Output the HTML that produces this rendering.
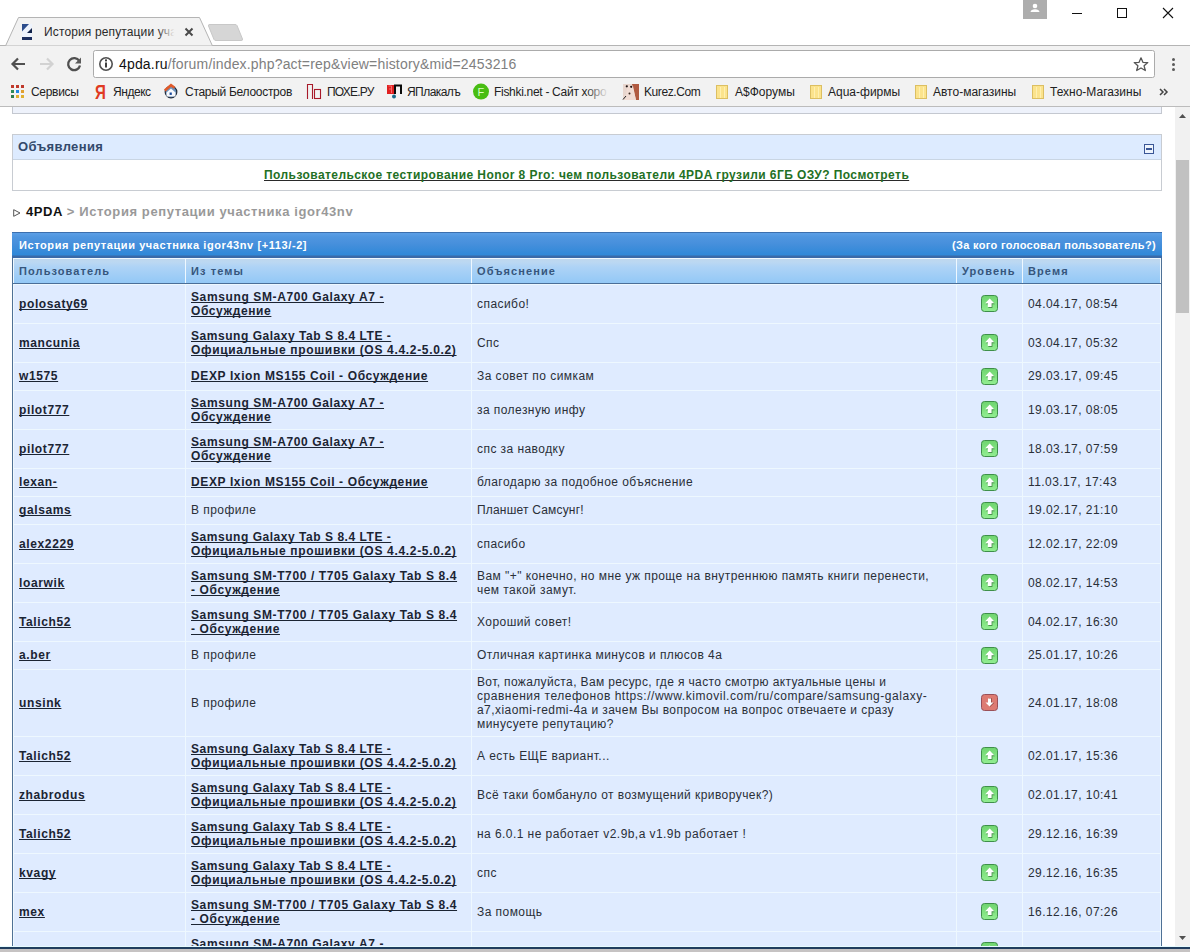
<!DOCTYPE html>
<html><head><meta charset="utf-8"><style>
*{margin:0;padding:0;box-sizing:border-box}
html,body{width:1190px;height:952px;overflow:hidden;background:#fff;font-family:"Liberation Sans", sans-serif}
#root{position:relative;width:1190px;height:952px;overflow:hidden;background:#fff}
.a{position:absolute}
.t{position:absolute;white-space:pre;line-height:1}
.cell{position:absolute;background:#dfebff}
.lk{position:absolute;white-space:pre;font-size:12px;line-height:14px;font-weight:bold;color:#1b2433;letter-spacing:0.62px;text-decoration:underline;text-decoration-thickness:1px;text-underline-offset:1px;text-decoration-skip-ink:none}
.nm{position:absolute;white-space:pre;font-size:12px;line-height:14px;color:#2a2f38;letter-spacing:0.44px}
.ic{position:absolute}
.bm{position:absolute;top:85px;font-size:12px;line-height:14px;color:#222;white-space:pre}
</style></head><body><div id="root">
<!-- title bar -->
<svg class="a" style="left:0;top:0" width="1190" height="46" viewBox="0 0 1190 46">
  <path d="M0 45.5 H6" stroke="#b4b4b4" stroke-width="1"/>
  <path d="M211 45.5 H1190" stroke="#b4b4b4" stroke-width="1"/>
  <path d="M5.5 46 L18.5 17.5 H199.5 L212.5 46 Z" fill="#f2f2f2" stroke="#b4b4b4" stroke-width="1"/>
  <path d="M209 24.5 H235 Q236.5 24.5 237 25.5 L242.5 39 Q243 40.5 241 40.5 H216 Q214.5 40.5 214 39.5 L208.5 26 Q208 24.5 209.5 24.5 Z" fill="#d6d6d6" stroke="#c8c8c8" stroke-width="1"/>
  <!-- favicon -->
  <rect x="22" y="24" width="10" height="16" fill="#eef3fc"/>
  <path d="M22 24 H29 L22 31.5 Z" fill="#2d4d8c"/>
  <path d="M32 28 V33 H27 Z" fill="#10224a"/>
  <rect x="22" y="37" width="10" height="3" fill="#1c2e5e"/>
  <!-- close x -->
  <path d="M185.5 28.5 L192.5 35.5 M192.5 28.5 L185.5 35.5" stroke="#4a4a4a" stroke-width="2"/>
  <!-- profile -->
  <rect x="1023" y="0" width="24" height="19" fill="#adadad"/>
  <circle cx="1035" cy="6" r="2.3" fill="#fff"/>
  <path d="M1030.5 12 Q1031 9.2 1035 9.2 Q1039 9.2 1039.5 12 Z" fill="#fff"/>
  <!-- min max close -->
  <path d="M1072 13.5 H1082" stroke="#111" stroke-width="1"/>
  <rect x="1117.5" y="8.5" width="9" height="9" fill="none" stroke="#111" stroke-width="1"/>
  <path d="M1163 8 L1173 18 M1173 8 L1163 18" stroke="#111" stroke-width="1.1"/>
</svg>
<div class="t" style="left:44px;top:25px;font-size:12px;line-height:14px;color:#2a2a2a;letter-spacing:0.13px">История репутации уча</div>
<div class="a" style="left:157px;top:22px;width:22px;height:20px;background:linear-gradient(90deg,rgba(242,242,242,0),#f2f2f2 80%)"></div>
<!-- toolbar -->
<div class="a" style="left:0;top:46px;width:1190px;height:60px;background:#f2f2f2"></div>
<div class="a" style="left:0;top:106px;width:1190px;height:1px;background:#bcbcbc"></div>
<svg class="a" style="left:0;top:46px" width="1190" height="60" viewBox="0 46 1190 60">
  <!-- back -->
  <path d="M25 64 H12.5 M18 58.5 L12.5 64 L18 69.5" stroke="#505050" stroke-width="2.2" fill="none"/>
  <!-- forward -->
  <path d="M40 64 H52.5 M47 58.5 L52.5 64 L47 69.5" stroke="#d2d2d2" stroke-width="2.2" fill="none"/>
  <!-- reload -->
  <path d="M79.3 61 A6 6 0 1 0 80 65.5" stroke="#505050" stroke-width="2.3" fill="none"/>
  <path d="M81 57.5 V63.5 H75 Z" fill="#5a5a5a"/>
  <!-- omnibox -->
  <rect x="93.5" y="50.5" width="1061" height="27" rx="2" fill="#fff" stroke="#ababab"/>
  <circle cx="106" cy="64" r="6.2" stroke="#505050" stroke-width="1.6" fill="none"/>
  <rect x="105" y="62.5" width="2" height="5" fill="#404040"/>
  <rect x="105" y="59.4" width="2" height="2" fill="#404040"/>
  <!-- star -->
  <path d="M1141 57.8 L1142.9 62.3 L1147.8 62.6 L1144.1 65.8 L1145.3 70.5 L1141 68 L1136.7 70.5 L1137.9 65.8 L1134.2 62.6 L1139.1 62.3 Z" fill="none" stroke="#555" stroke-width="1.3" stroke-linejoin="round"/>
  <!-- menu -->
  <circle cx="1173.5" cy="59.5" r="1.5" fill="#5a5a5a"/>
  <circle cx="1173.5" cy="64.5" r="1.5" fill="#5a5a5a"/>
  <circle cx="1173.5" cy="69.5" r="1.5" fill="#5a5a5a"/>
  <!-- apps grid -->
  <g>
   <rect x="11" y="85" width="3" height="3" fill="#c0392b"/><rect x="16" y="85" width="3" height="3" fill="#c0392b"/><rect x="21" y="85" width="3" height="3" fill="#c0392b"/>
   <rect x="11" y="90" width="3" height="3" fill="#2e8b57"/><rect x="16" y="90" width="3" height="3" fill="#1e88e5"/><rect x="21" y="90" width="3" height="3" fill="#e0a030"/>
   <rect x="11" y="95" width="3" height="3" fill="#2e7d4f"/><rect x="16" y="95" width="3" height="3" fill="#e0b030"/><rect x="21" y="95" width="3" height="3" fill="#e0b030"/>
  </g>
  <!-- yandex Я -->
  <text x="95" y="99.5" font-family="Liberation Sans" font-weight="bold" font-size="21" fill="#e03a22" transform="translate(95 99.5) scale(0.72 1) translate(-95 -99.5)">Я</text>
  <!-- old house -->
  <circle cx="171" cy="92" r="5.8" fill="#6d93bb" stroke="#1e2a3a" stroke-width="1.2"/>
  <path d="M166.5 92.5 L171 88.5 L175.5 92.5 V96.5 H166.5 Z" fill="#f6f8fc"/>
  <rect x="169.6" y="92.5" width="2.2" height="2.4" fill="#1a4a9a"/>
  <path d="M164.8 90.5 L171 85.2 L174.5 87.8" stroke="#e05a2a" stroke-width="2.6" fill="none"/>
  <!-- ПО -->
  <path d="M307.5 99 V84.5 H312.5 V99" stroke="#a81a2a" stroke-width="1.1" fill="none"/>
  <rect x="314.5" y="89.5" width="6" height="9" stroke="#a81a2a" stroke-width="1.1" fill="none"/>
  <!-- ЯП -->
  <rect x="387" y="85" width="7" height="9" fill="#e02020"/>
  <path d="M388.5 86 H391.5 V93 M389 89 H391" stroke="#ff8080" stroke-width="0.8" fill="none"/>
  <path d="M395 94 V85.5 H401 V94" stroke="#0a0a0a" stroke-width="2" fill="none"/>
  <circle cx="394" cy="96.6" r="2" fill="#1a6a8a"/>
  <!-- fishki -->
  <circle cx="481" cy="91.6" r="8" fill="#48bd12"/>
  <text x="477.5" y="96" font-family="Liberation Sans" font-size="11" fill="#d8ffc0">F</text>
  <!-- kurez -->
  <rect x="623" y="84" width="16" height="16" fill="#e8d6ce"/>
  <path d="M632 84 H639 V100 H636 Q634 92 632 84 Z" fill="#b05a40"/>
  <path d="M625 100 L627 89 Q628 85 630 85 L633 86 L636 100 Z" fill="#f0dcd4"/>
  <circle cx="626.8" cy="86.3" r="1.1" fill="#1a1010"/><circle cx="631.2" cy="86.8" r="1.1" fill="#1a1010"/>
  <circle cx="629.5" cy="93.6" r="1" fill="#3a2a20"/>
  <path d="M623 99.5 L626 96" stroke="#222" stroke-width="1"/>
  <!-- folders -->
  <rect x="716.5" y="85.5" width="11" height="13" fill="#fbe38c" stroke="#dcbf62"/><path d="M720.5 87 V98 M724.5 87 V98" stroke="#fff0b0" stroke-width="1"/><rect x="810.5" y="85.5" width="11" height="13" fill="#fbe38c" stroke="#dcbf62"/><path d="M814.5 87 V98 M818.5 87 V98" stroke="#fff0b0" stroke-width="1"/><rect x="915.5" y="85.5" width="11" height="13" fill="#fbe38c" stroke="#dcbf62"/><path d="M919.5 87 V98 M923.5 87 V98" stroke="#fff0b0" stroke-width="1"/><rect x="1032.5" y="85.5" width="11" height="13" fill="#fbe38c" stroke="#dcbf62"/><path d="M1036.5 87 V98 M1040.5 87 V98" stroke="#fff0b0" stroke-width="1"/>
  <!-- >> -->
  <path d="M1160 89 L1163 92 L1160 95 M1164 89 L1167 92 L1164 95" stroke="#444" stroke-width="1.5" fill="none"/>
</svg>
<div class="t" style="left:119px;top:57px;font-size:14px;line-height:14px;color:#808080;letter-spacing:0.17px"><span style="color:#111">4pda.ru</span>/forum/index.php?act=rep&amp;view=history&amp;mid=2453216</div>
<div class="bm" style="left:31px;letter-spacing:-0.3px">Сервисы</div>
<div class="bm" style="left:113px;letter-spacing:-0.45px">Яндекс</div>
<div class="bm" style="left:185px;letter-spacing:-0.29px">Старый Белоостров</div>
<div class="bm" style="left:327px;letter-spacing:-0.8px">ПОХЕ.РУ</div>
<div class="bm" style="left:407px;letter-spacing:-0.55px">ЯПлакалъ</div>
<div class="bm" style="left:494px;letter-spacing:-0.3px">Fishki.net - Сайт хоро</div>
<div class="a" style="left:585px;top:82px;width:28px;height:20px;background:linear-gradient(90deg,rgba(242,242,242,0),#f2f2f2 85%)"></div>
<div class="bm" style="left:644px;letter-spacing:-0.42px">Kurez.Com</div>
<div class="bm" style="left:735px">A$Форумы</div>
<div class="bm" style="left:828px">Aqua-фирмы</div>
<div class="bm" style="left:933px">Авто-магазины</div>
<div class="bm" style="left:1050px">Техно-Магазины</div>

<!-- page -->
<div class="a" style="left:12px;top:107px;width:1150px;height:7px;background:#eef2fb;border:1px solid #c4c8d0;border-top:none"></div>
<div class="a" style="left:12px;top:134px;width:1150px;height:57px;border:1px solid #c8ccd2;background:#fff"></div>
<div class="a" style="left:13px;top:135px;width:1148px;height:25px;background:#ddebff;border-bottom:1px solid #c9d5e3"></div>
<div class="t" style="left:18px;top:140px;font-size:13px;font-weight:bold;color:#33496b;letter-spacing:0.36px">Объявления</div>
<svg class="a" style="left:1144px;top:144px" width="10" height="10" viewBox="0 0 10 10"><rect x="0.5" y="0.5" width="9" height="9" fill="#eef4fc" stroke="#3a5696"/><rect x="2" y="4" width="6" height="2" fill="#3a5696"/></svg>
<div class="t" style="left:264px;top:169px;font-size:12px;font-weight:bold;color:#237024;letter-spacing:0.43px;text-decoration:underline;text-decoration-color:#2a2a2a;text-underline-offset:1px;text-decoration-skip-ink:none">Пользовательское тестирование Honor 8 Pro: чем пользователи 4PDA грузили 6ГБ ОЗУ? Посмотреть</div>

<svg class="a" style="left:13px;top:209px" width="8" height="8" viewBox="0 0 8 8"><path d="M0.7 0.7 L7 4 L0.7 7.3 Z" fill="none" stroke="#555" stroke-width="1"/></svg>
<div class="t" style="left:26px;top:205px;font-size:13px;font-weight:bold;color:#999;letter-spacing:0.6px"><span style="color:#111">4PDA</span> &gt; История репутации участника igor43nv</div>

<!-- table -->
<div class="a" style="left:12px;top:232px;width:1150px;height:720px;background:#eef8ff;border-left:1px solid #4f7196;border-right:1px solid #4f7196"></div>
<div class="a" style="left:12px;top:232px;width:1150px;height:26px;background:linear-gradient(180deg,#3b6fae 0,#3b6fae 1px,#5c9fe6 1px,#4f96df 5px,#4890dc 11px,#2f88d8 23px,#3a6aa8 24px,#3a6aa8 26px)"></div>
<div class="t" style="left:19px;top:240px;font-size:11px;font-weight:bold;color:#fff;letter-spacing:0.59px">История репутации участника igor43nv [+113/-2]</div>
<div class="t" style="left:952px;top:240px;font-size:11px;font-weight:bold;color:#fff;letter-spacing:0.33px">(За кого голосовал пользователь?)</div>
<div class="a" style="left:14px;top:259px;width:171px;height:24px;background:linear-gradient(180deg,#bed7ee 0,#bcd8f2 3px,#aed3f6 8px,#93c8f6 24px)"></div><div class="a" style="left:186px;top:259px;width:285px;height:24px;background:linear-gradient(180deg,#bed7ee 0,#bcd8f2 3px,#aed3f6 8px,#93c8f6 24px)"></div><div class="a" style="left:472px;top:259px;width:484px;height:24px;background:linear-gradient(180deg,#bed7ee 0,#bcd8f2 3px,#aed3f6 8px,#93c8f6 24px)"></div><div class="a" style="left:957px;top:259px;width:65px;height:24px;background:linear-gradient(180deg,#bed7ee 0,#bcd8f2 3px,#aed3f6 8px,#93c8f6 24px)"></div><div class="a" style="left:1023px;top:259px;width:137px;height:24px;background:linear-gradient(180deg,#bed7ee 0,#bcd8f2 3px,#aed3f6 8px,#93c8f6 24px)"></div>
<div class="a" style="left:13px;top:283px;width:1148px;height:1px;background:#4b6e98"></div>
<div class="t" style="left:19px;top:266px;font-size:11px;font-weight:bold;color:#36567c;letter-spacing:1.1px">Пользователь</div>
<div class="t" style="left:191px;top:266px;font-size:11px;font-weight:bold;color:#36567c;letter-spacing:1.1px">Из темы</div>
<div class="t" style="left:477px;top:266px;font-size:11px;font-weight:bold;color:#36567c;letter-spacing:1.1px">Объяснение</div>
<div class="t" style="left:962px;top:266px;font-size:11px;font-weight:bold;color:#36567c;letter-spacing:1.1px">Уровень</div>
<div class="t" style="left:1028px;top:266px;font-size:11px;font-weight:bold;color:#36567c;letter-spacing:1.1px">Время</div>
<div class="cell" style="left:14px;top:285px;width:171px;height:38px"></div><div class="cell" style="left:186px;top:285px;width:285px;height:38px"></div><div class="cell" style="left:472px;top:285px;width:484px;height:38px"></div><div class="cell" style="left:957px;top:285px;width:65px;height:38px"></div><div class="cell" style="left:1023px;top:285px;width:137px;height:38px"></div><div class="lk" style="left:19px;top:297px"><div style="height:14px">polosaty69</div></div><div class="lk" style="left:191px;top:290px"><div style="height:14px">Samsung SM-A700 Galaxy A7 -</div><div style="height:14px">Обсуждение</div></div><div class="nm" style="left:477px;top:297px"><div style="height:14px">спасибо!</div></div><svg class="ic" style="left:981px;top:295px" width="17" height="17" viewBox="0 0 17 17">
<defs><linearGradient id="gu" x1="0" y1="0" x2="0" y2="1"><stop offset="0" stop-color="#6fd46f"/><stop offset="1" stop-color="#92ee92"/></linearGradient></defs>
<rect x="0.5" y="0.5" width="16" height="16" rx="3" fill="url(#gu)" stroke="#3f8f4a"/>
<path d="M8.5 3.8 L13 8.3 L10.5 8.3 L10.5 12 L6.5 12 L6.5 8.3 L4 8.3 Z" fill="#1f5a25" opacity="0.6" transform="translate(0.9,0.9)"/>
<path d="M8.7 3.6 L13.2 8.2 L10.6 8.2 L10.6 12 L6.8 12 L6.8 8.2 L4.2 8.2 Z" fill="#ffffff"/>
</svg><div class="nm" style="left:1028px;top:297px"><div style="height:14px">04.04.17, 08:54</div></div><div class="cell" style="left:14px;top:324px;width:171px;height:38px"></div><div class="cell" style="left:186px;top:324px;width:285px;height:38px"></div><div class="cell" style="left:472px;top:324px;width:484px;height:38px"></div><div class="cell" style="left:957px;top:324px;width:65px;height:38px"></div><div class="cell" style="left:1023px;top:324px;width:137px;height:38px"></div><div class="lk" style="left:19px;top:336px"><div style="height:14px">mancunia</div></div><div class="lk" style="left:191px;top:329px"><div style="height:14px;letter-spacing:0.535px">Samsung Galaxy Tab S 8.4 LTE -</div><div style="height:14px;letter-spacing:0.675px">Официальные прошивки (OS 4.4.2-5.0.2)</div></div><div class="nm" style="left:477px;top:336px"><div style="height:14px">Спс</div></div><svg class="ic" style="left:981px;top:334px" width="17" height="17" viewBox="0 0 17 17">
<defs><linearGradient id="gu" x1="0" y1="0" x2="0" y2="1"><stop offset="0" stop-color="#6fd46f"/><stop offset="1" stop-color="#92ee92"/></linearGradient></defs>
<rect x="0.5" y="0.5" width="16" height="16" rx="3" fill="url(#gu)" stroke="#3f8f4a"/>
<path d="M8.5 3.8 L13 8.3 L10.5 8.3 L10.5 12 L6.5 12 L6.5 8.3 L4 8.3 Z" fill="#1f5a25" opacity="0.6" transform="translate(0.9,0.9)"/>
<path d="M8.7 3.6 L13.2 8.2 L10.6 8.2 L10.6 12 L6.8 12 L6.8 8.2 L4.2 8.2 Z" fill="#ffffff"/>
</svg><div class="nm" style="left:1028px;top:336px"><div style="height:14px">03.04.17, 05:32</div></div><div class="cell" style="left:14px;top:363px;width:171px;height:27px"></div><div class="cell" style="left:186px;top:363px;width:285px;height:27px"></div><div class="cell" style="left:472px;top:363px;width:484px;height:27px"></div><div class="cell" style="left:957px;top:363px;width:65px;height:27px"></div><div class="cell" style="left:1023px;top:363px;width:137px;height:27px"></div><div class="lk" style="left:19px;top:369px"><div style="height:14px">w1575</div></div><div class="lk" style="left:191px;top:369px"><div style="height:14px">DEXP Ixion MS155 Coil - Обсуждение</div></div><div class="nm" style="left:477px;top:369px"><div style="height:14px">За совет по симкам</div></div><svg class="ic" style="left:981px;top:368px" width="17" height="17" viewBox="0 0 17 17">
<defs><linearGradient id="gu" x1="0" y1="0" x2="0" y2="1"><stop offset="0" stop-color="#6fd46f"/><stop offset="1" stop-color="#92ee92"/></linearGradient></defs>
<rect x="0.5" y="0.5" width="16" height="16" rx="3" fill="url(#gu)" stroke="#3f8f4a"/>
<path d="M8.5 3.8 L13 8.3 L10.5 8.3 L10.5 12 L6.5 12 L6.5 8.3 L4 8.3 Z" fill="#1f5a25" opacity="0.6" transform="translate(0.9,0.9)"/>
<path d="M8.7 3.6 L13.2 8.2 L10.6 8.2 L10.6 12 L6.8 12 L6.8 8.2 L4.2 8.2 Z" fill="#ffffff"/>
</svg><div class="nm" style="left:1028px;top:369px"><div style="height:14px">29.03.17, 09:45</div></div><div class="cell" style="left:14px;top:391px;width:171px;height:38px"></div><div class="cell" style="left:186px;top:391px;width:285px;height:38px"></div><div class="cell" style="left:472px;top:391px;width:484px;height:38px"></div><div class="cell" style="left:957px;top:391px;width:65px;height:38px"></div><div class="cell" style="left:1023px;top:391px;width:137px;height:38px"></div><div class="lk" style="left:19px;top:403px"><div style="height:14px">pilot777</div></div><div class="lk" style="left:191px;top:396px"><div style="height:14px">Samsung SM-A700 Galaxy A7 -</div><div style="height:14px">Обсуждение</div></div><div class="nm" style="left:477px;top:403px"><div style="height:14px">за полезную инфу</div></div><svg class="ic" style="left:981px;top:401px" width="17" height="17" viewBox="0 0 17 17">
<defs><linearGradient id="gu" x1="0" y1="0" x2="0" y2="1"><stop offset="0" stop-color="#6fd46f"/><stop offset="1" stop-color="#92ee92"/></linearGradient></defs>
<rect x="0.5" y="0.5" width="16" height="16" rx="3" fill="url(#gu)" stroke="#3f8f4a"/>
<path d="M8.5 3.8 L13 8.3 L10.5 8.3 L10.5 12 L6.5 12 L6.5 8.3 L4 8.3 Z" fill="#1f5a25" opacity="0.6" transform="translate(0.9,0.9)"/>
<path d="M8.7 3.6 L13.2 8.2 L10.6 8.2 L10.6 12 L6.8 12 L6.8 8.2 L4.2 8.2 Z" fill="#ffffff"/>
</svg><div class="nm" style="left:1028px;top:403px"><div style="height:14px">19.03.17, 08:05</div></div><div class="cell" style="left:14px;top:430px;width:171px;height:38px"></div><div class="cell" style="left:186px;top:430px;width:285px;height:38px"></div><div class="cell" style="left:472px;top:430px;width:484px;height:38px"></div><div class="cell" style="left:957px;top:430px;width:65px;height:38px"></div><div class="cell" style="left:1023px;top:430px;width:137px;height:38px"></div><div class="lk" style="left:19px;top:442px"><div style="height:14px">pilot777</div></div><div class="lk" style="left:191px;top:435px"><div style="height:14px">Samsung SM-A700 Galaxy A7 -</div><div style="height:14px">Обсуждение</div></div><div class="nm" style="left:477px;top:442px"><div style="height:14px">спс за наводку</div></div><svg class="ic" style="left:981px;top:440px" width="17" height="17" viewBox="0 0 17 17">
<defs><linearGradient id="gu" x1="0" y1="0" x2="0" y2="1"><stop offset="0" stop-color="#6fd46f"/><stop offset="1" stop-color="#92ee92"/></linearGradient></defs>
<rect x="0.5" y="0.5" width="16" height="16" rx="3" fill="url(#gu)" stroke="#3f8f4a"/>
<path d="M8.5 3.8 L13 8.3 L10.5 8.3 L10.5 12 L6.5 12 L6.5 8.3 L4 8.3 Z" fill="#1f5a25" opacity="0.6" transform="translate(0.9,0.9)"/>
<path d="M8.7 3.6 L13.2 8.2 L10.6 8.2 L10.6 12 L6.8 12 L6.8 8.2 L4.2 8.2 Z" fill="#ffffff"/>
</svg><div class="nm" style="left:1028px;top:442px"><div style="height:14px">18.03.17, 07:59</div></div><div class="cell" style="left:14px;top:469px;width:171px;height:27px"></div><div class="cell" style="left:186px;top:469px;width:285px;height:27px"></div><div class="cell" style="left:472px;top:469px;width:484px;height:27px"></div><div class="cell" style="left:957px;top:469px;width:65px;height:27px"></div><div class="cell" style="left:1023px;top:469px;width:137px;height:27px"></div><div class="lk" style="left:19px;top:475px"><div style="height:14px">lexan-</div></div><div class="lk" style="left:191px;top:475px"><div style="height:14px">DEXP Ixion MS155 Coil - Обсуждение</div></div><div class="nm" style="left:477px;top:475px"><div style="height:14px">благодарю за подобное объяснение</div></div><svg class="ic" style="left:981px;top:474px" width="17" height="17" viewBox="0 0 17 17">
<defs><linearGradient id="gu" x1="0" y1="0" x2="0" y2="1"><stop offset="0" stop-color="#6fd46f"/><stop offset="1" stop-color="#92ee92"/></linearGradient></defs>
<rect x="0.5" y="0.5" width="16" height="16" rx="3" fill="url(#gu)" stroke="#3f8f4a"/>
<path d="M8.5 3.8 L13 8.3 L10.5 8.3 L10.5 12 L6.5 12 L6.5 8.3 L4 8.3 Z" fill="#1f5a25" opacity="0.6" transform="translate(0.9,0.9)"/>
<path d="M8.7 3.6 L13.2 8.2 L10.6 8.2 L10.6 12 L6.8 12 L6.8 8.2 L4.2 8.2 Z" fill="#ffffff"/>
</svg><div class="nm" style="left:1028px;top:475px"><div style="height:14px">11.03.17, 17:43</div></div><div class="cell" style="left:14px;top:497px;width:171px;height:27px"></div><div class="cell" style="left:186px;top:497px;width:285px;height:27px"></div><div class="cell" style="left:472px;top:497px;width:484px;height:27px"></div><div class="cell" style="left:957px;top:497px;width:65px;height:27px"></div><div class="cell" style="left:1023px;top:497px;width:137px;height:27px"></div><div class="lk" style="left:19px;top:503px"><div style="height:14px">galsams</div></div><div class="nm" style="left:191px;top:503px"><div style="height:14px">В профиле</div></div><div class="nm" style="left:477px;top:503px"><div style="height:14px;letter-spacing:0.190px">Планшет Самсунг!</div></div><svg class="ic" style="left:981px;top:502px" width="17" height="17" viewBox="0 0 17 17">
<defs><linearGradient id="gu" x1="0" y1="0" x2="0" y2="1"><stop offset="0" stop-color="#6fd46f"/><stop offset="1" stop-color="#92ee92"/></linearGradient></defs>
<rect x="0.5" y="0.5" width="16" height="16" rx="3" fill="url(#gu)" stroke="#3f8f4a"/>
<path d="M8.5 3.8 L13 8.3 L10.5 8.3 L10.5 12 L6.5 12 L6.5 8.3 L4 8.3 Z" fill="#1f5a25" opacity="0.6" transform="translate(0.9,0.9)"/>
<path d="M8.7 3.6 L13.2 8.2 L10.6 8.2 L10.6 12 L6.8 12 L6.8 8.2 L4.2 8.2 Z" fill="#ffffff"/>
</svg><div class="nm" style="left:1028px;top:503px"><div style="height:14px">19.02.17, 21:10</div></div><div class="cell" style="left:14px;top:525px;width:171px;height:38px"></div><div class="cell" style="left:186px;top:525px;width:285px;height:38px"></div><div class="cell" style="left:472px;top:525px;width:484px;height:38px"></div><div class="cell" style="left:957px;top:525px;width:65px;height:38px"></div><div class="cell" style="left:1023px;top:525px;width:137px;height:38px"></div><div class="lk" style="left:19px;top:537px"><div style="height:14px">alex2229</div></div><div class="lk" style="left:191px;top:530px"><div style="height:14px;letter-spacing:0.535px">Samsung Galaxy Tab S 8.4 LTE -</div><div style="height:14px;letter-spacing:0.675px">Официальные прошивки (OS 4.4.2-5.0.2)</div></div><div class="nm" style="left:477px;top:537px"><div style="height:14px">спасибо</div></div><svg class="ic" style="left:981px;top:535px" width="17" height="17" viewBox="0 0 17 17">
<defs><linearGradient id="gu" x1="0" y1="0" x2="0" y2="1"><stop offset="0" stop-color="#6fd46f"/><stop offset="1" stop-color="#92ee92"/></linearGradient></defs>
<rect x="0.5" y="0.5" width="16" height="16" rx="3" fill="url(#gu)" stroke="#3f8f4a"/>
<path d="M8.5 3.8 L13 8.3 L10.5 8.3 L10.5 12 L6.5 12 L6.5 8.3 L4 8.3 Z" fill="#1f5a25" opacity="0.6" transform="translate(0.9,0.9)"/>
<path d="M8.7 3.6 L13.2 8.2 L10.6 8.2 L10.6 12 L6.8 12 L6.8 8.2 L4.2 8.2 Z" fill="#ffffff"/>
</svg><div class="nm" style="left:1028px;top:537px"><div style="height:14px">12.02.17, 22:09</div></div><div class="cell" style="left:14px;top:564px;width:171px;height:38px"></div><div class="cell" style="left:186px;top:564px;width:285px;height:38px"></div><div class="cell" style="left:472px;top:564px;width:484px;height:38px"></div><div class="cell" style="left:957px;top:564px;width:65px;height:38px"></div><div class="cell" style="left:1023px;top:564px;width:137px;height:38px"></div><div class="lk" style="left:19px;top:576px"><div style="height:14px">loarwik</div></div><div class="lk" style="left:191px;top:569px"><div style="height:14px">Samsung SM-T700 / T705 Galaxy Tab S 8.4</div><div style="height:14px">- Обсуждение</div></div><div class="nm" style="left:477px;top:569px"><div style="height:14px">Вам &quot;+&quot; конечно, но мне уж проще на внутреннюю память книги перенести,</div><div style="height:14px">чем такой замут.</div></div><svg class="ic" style="left:981px;top:574px" width="17" height="17" viewBox="0 0 17 17">
<defs><linearGradient id="gu" x1="0" y1="0" x2="0" y2="1"><stop offset="0" stop-color="#6fd46f"/><stop offset="1" stop-color="#92ee92"/></linearGradient></defs>
<rect x="0.5" y="0.5" width="16" height="16" rx="3" fill="url(#gu)" stroke="#3f8f4a"/>
<path d="M8.5 3.8 L13 8.3 L10.5 8.3 L10.5 12 L6.5 12 L6.5 8.3 L4 8.3 Z" fill="#1f5a25" opacity="0.6" transform="translate(0.9,0.9)"/>
<path d="M8.7 3.6 L13.2 8.2 L10.6 8.2 L10.6 12 L6.8 12 L6.8 8.2 L4.2 8.2 Z" fill="#ffffff"/>
</svg><div class="nm" style="left:1028px;top:576px"><div style="height:14px">08.02.17, 14:53</div></div><div class="cell" style="left:14px;top:603px;width:171px;height:38px"></div><div class="cell" style="left:186px;top:603px;width:285px;height:38px"></div><div class="cell" style="left:472px;top:603px;width:484px;height:38px"></div><div class="cell" style="left:957px;top:603px;width:65px;height:38px"></div><div class="cell" style="left:1023px;top:603px;width:137px;height:38px"></div><div class="lk" style="left:19px;top:615px"><div style="height:14px">Talich52</div></div><div class="lk" style="left:191px;top:608px"><div style="height:14px">Samsung SM-T700 / T705 Galaxy Tab S 8.4</div><div style="height:14px">- Обсуждение</div></div><div class="nm" style="left:477px;top:615px"><div style="height:14px">Хороший совет!</div></div><svg class="ic" style="left:981px;top:613px" width="17" height="17" viewBox="0 0 17 17">
<defs><linearGradient id="gu" x1="0" y1="0" x2="0" y2="1"><stop offset="0" stop-color="#6fd46f"/><stop offset="1" stop-color="#92ee92"/></linearGradient></defs>
<rect x="0.5" y="0.5" width="16" height="16" rx="3" fill="url(#gu)" stroke="#3f8f4a"/>
<path d="M8.5 3.8 L13 8.3 L10.5 8.3 L10.5 12 L6.5 12 L6.5 8.3 L4 8.3 Z" fill="#1f5a25" opacity="0.6" transform="translate(0.9,0.9)"/>
<path d="M8.7 3.6 L13.2 8.2 L10.6 8.2 L10.6 12 L6.8 12 L6.8 8.2 L4.2 8.2 Z" fill="#ffffff"/>
</svg><div class="nm" style="left:1028px;top:615px"><div style="height:14px">04.02.17, 16:30</div></div><div class="cell" style="left:14px;top:642px;width:171px;height:27px"></div><div class="cell" style="left:186px;top:642px;width:285px;height:27px"></div><div class="cell" style="left:472px;top:642px;width:484px;height:27px"></div><div class="cell" style="left:957px;top:642px;width:65px;height:27px"></div><div class="cell" style="left:1023px;top:642px;width:137px;height:27px"></div><div class="lk" style="left:19px;top:648px"><div style="height:14px">a.ber</div></div><div class="nm" style="left:191px;top:648px"><div style="height:14px">В профиле</div></div><div class="nm" style="left:477px;top:648px"><div style="height:14px">Отличная картинка минусов и плюсов 4а</div></div><svg class="ic" style="left:981px;top:647px" width="17" height="17" viewBox="0 0 17 17">
<defs><linearGradient id="gu" x1="0" y1="0" x2="0" y2="1"><stop offset="0" stop-color="#6fd46f"/><stop offset="1" stop-color="#92ee92"/></linearGradient></defs>
<rect x="0.5" y="0.5" width="16" height="16" rx="3" fill="url(#gu)" stroke="#3f8f4a"/>
<path d="M8.5 3.8 L13 8.3 L10.5 8.3 L10.5 12 L6.5 12 L6.5 8.3 L4 8.3 Z" fill="#1f5a25" opacity="0.6" transform="translate(0.9,0.9)"/>
<path d="M8.7 3.6 L13.2 8.2 L10.6 8.2 L10.6 12 L6.8 12 L6.8 8.2 L4.2 8.2 Z" fill="#ffffff"/>
</svg><div class="nm" style="left:1028px;top:648px"><div style="height:14px">25.01.17, 10:26</div></div><div class="cell" style="left:14px;top:670px;width:171px;height:66px"></div><div class="cell" style="left:186px;top:670px;width:285px;height:66px"></div><div class="cell" style="left:472px;top:670px;width:484px;height:66px"></div><div class="cell" style="left:957px;top:670px;width:65px;height:66px"></div><div class="cell" style="left:1023px;top:670px;width:137px;height:66px"></div><div class="lk" style="left:19px;top:696px"><div style="height:14px">unsink</div></div><div class="nm" style="left:191px;top:696px"><div style="height:14px">В профиле</div></div><div class="nm" style="left:477px;top:675px"><div style="height:14px;letter-spacing:0.360px">Вот, пожалуйста, Вам ресурс, где я часто смотрю актуальные цены и</div><div style="height:14px;letter-spacing:0.530px">сравнения телефонов https://www.kimovil.com/ru/compare/samsung-galaxy-</div><div style="height:14px">a7,xiaomi-redmi-4a и зачем Вы вопросом на вопрос отвечаете и сразу</div><div style="height:14px">минусуете репутацию?</div></div><svg class="ic" style="left:981px;top:694px" width="17" height="17" viewBox="0 0 17 17">
<rect x="0.5" y="0.5" width="16" height="16" rx="3" fill="#dd7b73" stroke="#9a5058"/>
<path d="M7 4 L10 4 L10 8.5 L12.5 8.5 L8.5 12.5 L4.5 8.5 L7 8.5 Z" fill="#4a1a1a" opacity="0.55" transform="translate(0.8,0.3)"/>
<path d="M7 4.5 L10 4.5 L10 8.5 L12.5 8.5 L8.5 12.5 L4.5 8.5 L7 8.5 Z" fill="#ffffff"/>
</svg><div class="nm" style="left:1028px;top:696px"><div style="height:14px">24.01.17, 18:08</div></div><div class="cell" style="left:14px;top:737px;width:171px;height:38px"></div><div class="cell" style="left:186px;top:737px;width:285px;height:38px"></div><div class="cell" style="left:472px;top:737px;width:484px;height:38px"></div><div class="cell" style="left:957px;top:737px;width:65px;height:38px"></div><div class="cell" style="left:1023px;top:737px;width:137px;height:38px"></div><div class="lk" style="left:19px;top:749px"><div style="height:14px">Talich52</div></div><div class="lk" style="left:191px;top:742px"><div style="height:14px;letter-spacing:0.535px">Samsung Galaxy Tab S 8.4 LTE -</div><div style="height:14px;letter-spacing:0.675px">Официальные прошивки (OS 4.4.2-5.0.2)</div></div><div class="nm" style="left:477px;top:749px"><div style="height:14px">А есть ЕЩЕ вариант...</div></div><svg class="ic" style="left:981px;top:747px" width="17" height="17" viewBox="0 0 17 17">
<defs><linearGradient id="gu" x1="0" y1="0" x2="0" y2="1"><stop offset="0" stop-color="#6fd46f"/><stop offset="1" stop-color="#92ee92"/></linearGradient></defs>
<rect x="0.5" y="0.5" width="16" height="16" rx="3" fill="url(#gu)" stroke="#3f8f4a"/>
<path d="M8.5 3.8 L13 8.3 L10.5 8.3 L10.5 12 L6.5 12 L6.5 8.3 L4 8.3 Z" fill="#1f5a25" opacity="0.6" transform="translate(0.9,0.9)"/>
<path d="M8.7 3.6 L13.2 8.2 L10.6 8.2 L10.6 12 L6.8 12 L6.8 8.2 L4.2 8.2 Z" fill="#ffffff"/>
</svg><div class="nm" style="left:1028px;top:749px"><div style="height:14px">02.01.17, 15:36</div></div><div class="cell" style="left:14px;top:776px;width:171px;height:38px"></div><div class="cell" style="left:186px;top:776px;width:285px;height:38px"></div><div class="cell" style="left:472px;top:776px;width:484px;height:38px"></div><div class="cell" style="left:957px;top:776px;width:65px;height:38px"></div><div class="cell" style="left:1023px;top:776px;width:137px;height:38px"></div><div class="lk" style="left:19px;top:788px"><div style="height:14px">zhabrodus</div></div><div class="lk" style="left:191px;top:781px"><div style="height:14px;letter-spacing:0.535px">Samsung Galaxy Tab S 8.4 LTE -</div><div style="height:14px;letter-spacing:0.675px">Официальные прошивки (OS 4.4.2-5.0.2)</div></div><div class="nm" style="left:477px;top:788px"><div style="height:14px">Всё таки бомбануло от возмущений криворучек?)</div></div><svg class="ic" style="left:981px;top:786px" width="17" height="17" viewBox="0 0 17 17">
<defs><linearGradient id="gu" x1="0" y1="0" x2="0" y2="1"><stop offset="0" stop-color="#6fd46f"/><stop offset="1" stop-color="#92ee92"/></linearGradient></defs>
<rect x="0.5" y="0.5" width="16" height="16" rx="3" fill="url(#gu)" stroke="#3f8f4a"/>
<path d="M8.5 3.8 L13 8.3 L10.5 8.3 L10.5 12 L6.5 12 L6.5 8.3 L4 8.3 Z" fill="#1f5a25" opacity="0.6" transform="translate(0.9,0.9)"/>
<path d="M8.7 3.6 L13.2 8.2 L10.6 8.2 L10.6 12 L6.8 12 L6.8 8.2 L4.2 8.2 Z" fill="#ffffff"/>
</svg><div class="nm" style="left:1028px;top:788px"><div style="height:14px">02.01.17, 10:41</div></div><div class="cell" style="left:14px;top:815px;width:171px;height:38px"></div><div class="cell" style="left:186px;top:815px;width:285px;height:38px"></div><div class="cell" style="left:472px;top:815px;width:484px;height:38px"></div><div class="cell" style="left:957px;top:815px;width:65px;height:38px"></div><div class="cell" style="left:1023px;top:815px;width:137px;height:38px"></div><div class="lk" style="left:19px;top:827px"><div style="height:14px">Talich52</div></div><div class="lk" style="left:191px;top:820px"><div style="height:14px;letter-spacing:0.535px">Samsung Galaxy Tab S 8.4 LTE -</div><div style="height:14px;letter-spacing:0.675px">Официальные прошивки (OS 4.4.2-5.0.2)</div></div><div class="nm" style="left:477px;top:827px"><div style="height:14px">на 6.0.1 не работает v2.9b,a v1.9b работает !</div></div><svg class="ic" style="left:981px;top:825px" width="17" height="17" viewBox="0 0 17 17">
<defs><linearGradient id="gu" x1="0" y1="0" x2="0" y2="1"><stop offset="0" stop-color="#6fd46f"/><stop offset="1" stop-color="#92ee92"/></linearGradient></defs>
<rect x="0.5" y="0.5" width="16" height="16" rx="3" fill="url(#gu)" stroke="#3f8f4a"/>
<path d="M8.5 3.8 L13 8.3 L10.5 8.3 L10.5 12 L6.5 12 L6.5 8.3 L4 8.3 Z" fill="#1f5a25" opacity="0.6" transform="translate(0.9,0.9)"/>
<path d="M8.7 3.6 L13.2 8.2 L10.6 8.2 L10.6 12 L6.8 12 L6.8 8.2 L4.2 8.2 Z" fill="#ffffff"/>
</svg><div class="nm" style="left:1028px;top:827px"><div style="height:14px">29.12.16, 16:39</div></div><div class="cell" style="left:14px;top:854px;width:171px;height:38px"></div><div class="cell" style="left:186px;top:854px;width:285px;height:38px"></div><div class="cell" style="left:472px;top:854px;width:484px;height:38px"></div><div class="cell" style="left:957px;top:854px;width:65px;height:38px"></div><div class="cell" style="left:1023px;top:854px;width:137px;height:38px"></div><div class="lk" style="left:19px;top:866px"><div style="height:14px">kvagy</div></div><div class="lk" style="left:191px;top:859px"><div style="height:14px;letter-spacing:0.535px">Samsung Galaxy Tab S 8.4 LTE -</div><div style="height:14px;letter-spacing:0.675px">Официальные прошивки (OS 4.4.2-5.0.2)</div></div><div class="nm" style="left:477px;top:866px"><div style="height:14px">спс</div></div><svg class="ic" style="left:981px;top:864px" width="17" height="17" viewBox="0 0 17 17">
<defs><linearGradient id="gu" x1="0" y1="0" x2="0" y2="1"><stop offset="0" stop-color="#6fd46f"/><stop offset="1" stop-color="#92ee92"/></linearGradient></defs>
<rect x="0.5" y="0.5" width="16" height="16" rx="3" fill="url(#gu)" stroke="#3f8f4a"/>
<path d="M8.5 3.8 L13 8.3 L10.5 8.3 L10.5 12 L6.5 12 L6.5 8.3 L4 8.3 Z" fill="#1f5a25" opacity="0.6" transform="translate(0.9,0.9)"/>
<path d="M8.7 3.6 L13.2 8.2 L10.6 8.2 L10.6 12 L6.8 12 L6.8 8.2 L4.2 8.2 Z" fill="#ffffff"/>
</svg><div class="nm" style="left:1028px;top:866px"><div style="height:14px">29.12.16, 16:35</div></div><div class="cell" style="left:14px;top:893px;width:171px;height:38px"></div><div class="cell" style="left:186px;top:893px;width:285px;height:38px"></div><div class="cell" style="left:472px;top:893px;width:484px;height:38px"></div><div class="cell" style="left:957px;top:893px;width:65px;height:38px"></div><div class="cell" style="left:1023px;top:893px;width:137px;height:38px"></div><div class="lk" style="left:19px;top:905px"><div style="height:14px">mex</div></div><div class="lk" style="left:191px;top:898px"><div style="height:14px">Samsung SM-T700 / T705 Galaxy Tab S 8.4</div><div style="height:14px">- Обсуждение</div></div><div class="nm" style="left:477px;top:905px"><div style="height:14px">За помощь</div></div><svg class="ic" style="left:981px;top:903px" width="17" height="17" viewBox="0 0 17 17">
<defs><linearGradient id="gu" x1="0" y1="0" x2="0" y2="1"><stop offset="0" stop-color="#6fd46f"/><stop offset="1" stop-color="#92ee92"/></linearGradient></defs>
<rect x="0.5" y="0.5" width="16" height="16" rx="3" fill="url(#gu)" stroke="#3f8f4a"/>
<path d="M8.5 3.8 L13 8.3 L10.5 8.3 L10.5 12 L6.5 12 L6.5 8.3 L4 8.3 Z" fill="#1f5a25" opacity="0.6" transform="translate(0.9,0.9)"/>
<path d="M8.7 3.6 L13.2 8.2 L10.6 8.2 L10.6 12 L6.8 12 L6.8 8.2 L4.2 8.2 Z" fill="#ffffff"/>
</svg><div class="nm" style="left:1028px;top:905px"><div style="height:14px">16.12.16, 07:26</div></div><div class="cell" style="left:14px;top:932px;width:171px;height:38px"></div><div class="cell" style="left:186px;top:932px;width:285px;height:38px"></div><div class="cell" style="left:472px;top:932px;width:484px;height:38px"></div><div class="cell" style="left:957px;top:932px;width:65px;height:38px"></div><div class="cell" style="left:1023px;top:932px;width:137px;height:38px"></div><div class="lk" style="left:191px;top:937px"><div style="height:14px">Samsung SM-A700 Galaxy A7 -</div><div style="height:14px">Обсуждение</div></div><svg class="ic" style="left:981px;top:942px" width="17" height="17" viewBox="0 0 17 17">
<defs><linearGradient id="gu" x1="0" y1="0" x2="0" y2="1"><stop offset="0" stop-color="#6fd46f"/><stop offset="1" stop-color="#92ee92"/></linearGradient></defs>
<rect x="0.5" y="0.5" width="16" height="16" rx="3" fill="url(#gu)" stroke="#3f8f4a"/>
<path d="M8.5 3.8 L13 8.3 L10.5 8.3 L10.5 12 L6.5 12 L6.5 8.3 L4 8.3 Z" fill="#1f5a25" opacity="0.6" transform="translate(0.9,0.9)"/>
<path d="M8.7 3.6 L13.2 8.2 L10.6 8.2 L10.6 12 L6.8 12 L6.8 8.2 L4.2 8.2 Z" fill="#ffffff"/>
</svg>
<!-- scrollbar -->
<div class="a" style="left:1175px;top:107px;width:15px;height:845px;background:#f1f1f1"></div>
<div class="a" style="left:1176px;top:160px;width:13px;height:153px;background:#c1c1c1"></div>
<svg class="a" style="left:1175px;top:107px" width="15" height="845" viewBox="0 0 15 845">
  <path d="M4 11 L11 11 L7.5 7 Z" fill="#505050"/>
  <path d="M4 829 L11 829 L7.5 833 Z" fill="#505050"/>
</svg>
<!-- bottom taskbar edge -->
<div class="a" style="left:0;top:946px;width:1190px;height:1px;background:#e6fbff"></div>
<div class="a" style="left:0;top:947px;width:1190px;height:2px;background:#1f3d5e"></div>
<div class="a" style="left:0;top:949px;width:1190px;height:3px;background:#c6c3c3"></div>
</div></body></html>
